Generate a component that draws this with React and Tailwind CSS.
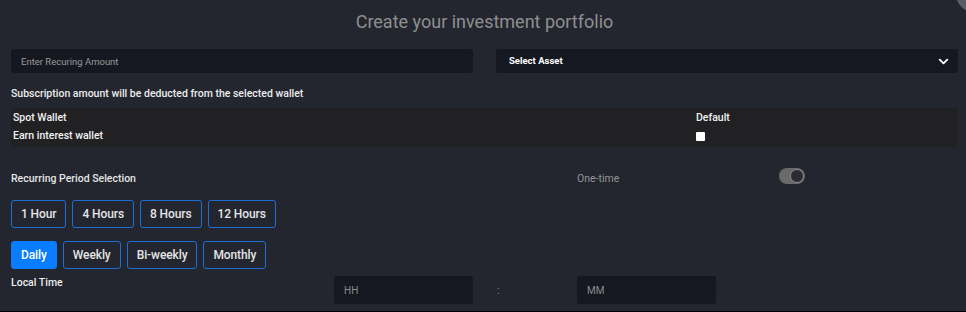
import { useState } from 'react';
import { ChevronDown } from 'lucide-react';

const hourOptions = ['1 Hour', '4 Hours', '8 Hours', '12 Hours'];
const periodOptions = ['Daily', 'Weekly', 'Bi-weekly', 'Monthly'];

const PeriodButton = ({ label, active, onClick }) => (
  <button
    type="button"
    onClick={onClick}
    className={`h-[28px] px-[9px] rounded-[3px] border text-[12px] font-medium leading-none tracking-[-0.1px] ${
      active
        ? 'bg-[#0a7dff] border-[#0a7dff] text-white'
        : 'bg-transparent border-[#1d6fd6] text-[#e4e4e4]'
    }`}
  >
    {label}
  </button>
);

const App = () => {
  const [hour, setHour] = useState(null);
  const [period, setPeriod] = useState('Daily');
  const [isDefault, setIsDefault] = useState(false);

  return (
    <div className="h-[312px] w-[966px] bg-black overflow-hidden font-['Roboto',sans-serif]">
      <div className="relative h-[311px] bg-[#23262f] pl-[11px] pr-[8px] overflow-hidden">
        {/* close button peeking from the corner */}
        <div className="absolute -right-[26px] -top-[24px] w-[36px] h-[36px] rounded-full bg-[#5b5e66]"></div>

        <h1 className="pt-[9px] h-[35px] text-center text-[18px] leading-[26px] text-[#8f8f8f] font-normal">
          Create your investment portfolio
        </h1>

        <div className="mt-[14px] grid grid-cols-2 gap-[23px]">
          <input
            type="text"
            placeholder="Enter Recuring Amount"
            className="h-[24px] rounded-[3px] bg-[#151821] px-[10px] text-[9.5px] text-white placeholder:text-[#9a9a9a] outline-none"
          />
          <div className="h-[24px] rounded-[3px] bg-[#151821] pl-[13px] pr-[7px] flex items-center justify-between">
            <span className="text-[9.5px] font-bold text-white">Select Asset</span>
            <ChevronDown size={15} strokeWidth={3} className="text-white" />
          </div>
        </div>

        <p className="mt-[14px] text-[10.5px] leading-[14px] font-medium text-[#ececec]">
          Subscription amount will be deducted from the selected wallet
        </p>

        <div className="mt-[7px] h-[39px] bg-[#212124] pl-[2px] pt-[1px] text-[10.5px] font-medium text-[#f2f2f2]">
          <div className="grid grid-cols-[683px_1fr] h-[18px] items-center">
            <span>Spot Wallet</span>
            <span>Default</span>
          </div>
          <div className="grid grid-cols-[683px_1fr] h-[18px] items-center">
            <span>Earn interest wallet</span>
            <span className="flex items-center">
              <button
                type="button"
                onClick={() => setIsDefault(!isDefault)}
                className={`w-[9px] h-[9px] rounded-[1px] ${isDefault ? 'bg-[#0a7dff]' : 'bg-white'}`}
              ></button>
            </span>
          </div>
        </div>

        <div className="mt-[22px] h-[20px] grid grid-cols-[566px_202px_1fr] items-center text-[10.5px]">
          <span className="font-medium text-[#e4e4e4]">Recurring Period Selection</span>
          <span className="text-[#959595]">One-time</span>
          <span className="flex items-center -mt-[6px]">
            <span className="relative w-[26px] h-[16px] rounded-full bg-[#6a6a6a]">
              <span className="absolute right-[1px] top-[1px] w-[14px] h-[14px] rounded-full bg-[#2a2c31] border-[1.5px] border-[#8a8a8a]"></span>
            </span>
          </span>
        </div>

        <div className="mt-[11px] flex gap-[6px]">
          {hourOptions.map((h) => (
            <PeriodButton key={h} label={h} active={hour === h} onClick={() => setHour(h)} />
          ))}
        </div>

        <div className="mt-[13px] flex gap-[6px]">
          {periodOptions.map((p) => (
            <PeriodButton key={p} label={p} active={period === p} onClick={() => setPeriod(p)} />
          ))}
        </div>

        <div className="mt-[7px] grid grid-cols-[323px_139px_104px_139px] items-start">
          <span className="text-[10.5px] leading-[14px] font-medium text-[#ececec]">Local Time</span>
          <input
            type="text"
            placeholder="HH"
            className="h-[28px] rounded-[3px] bg-[#151821] px-[10px] text-[10px] text-white placeholder:text-[#8c8c8c] outline-none"
          />
          <span className="h-[28px] flex items-center pl-[24px] text-[10px] text-[#8c8c8c]">:</span>
          <input
            type="text"
            placeholder="MM"
            className="h-[28px] rounded-[3px] bg-[#151821] px-[10px] text-[10px] text-white placeholder:text-[#8c8c8c] outline-none"
          />
        </div>
      </div>
    </div>
  );
};

export default App;
